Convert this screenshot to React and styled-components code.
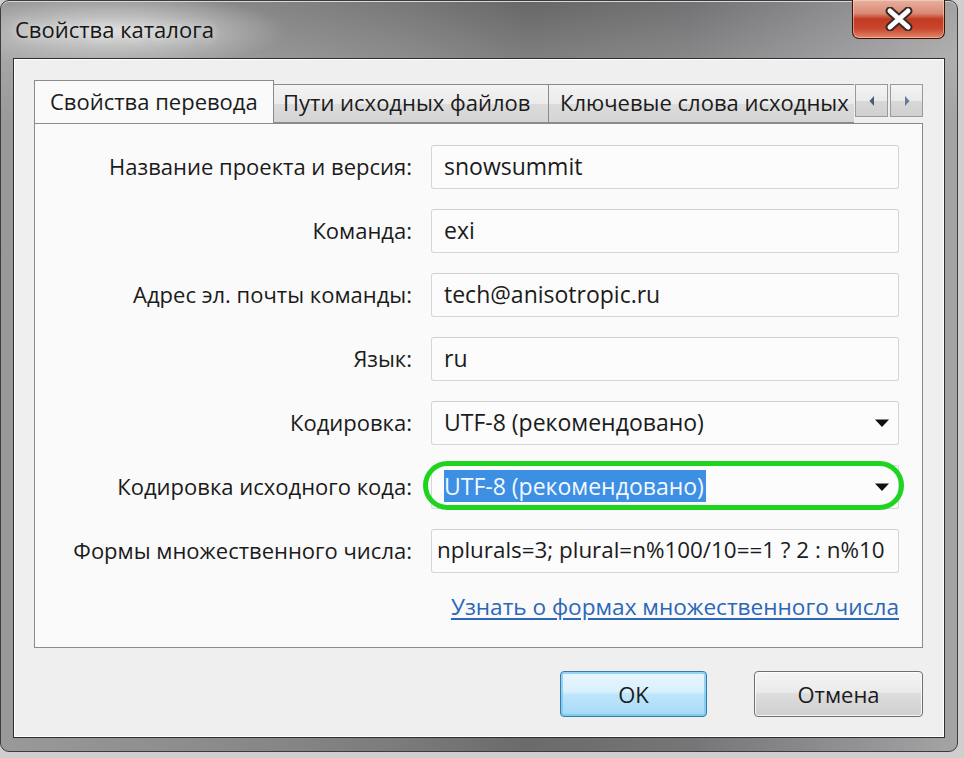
import React from 'react';
import styled, { createGlobalStyle } from 'styled-components';

const GlobalStyle = createGlobalStyle`
    html, body {
        margin: 0;
        padding: 0;
        background: #cfcfcf;
    }
    * {
        box-sizing: border-box;
    }
`;

const Window = styled.div`
    width: 958px;
    height: 752px;
    display: flex;
    flex-direction: column;
    padding: 0 12px 13px 12px;
    border: 1px solid #3c3c3c;
    border-radius: 9px;
    box-shadow: inset 0 1px 0 #d8d8d8;
    background:
        radial-gradient(ellipse 170px 38px at 115px 30px, rgba(225, 225, 225, 0.9), rgba(225, 225, 225, 0) 100%),
        linear-gradient(180deg, rgba(255, 255, 255, 0.08) 0px, rgba(255, 255, 255, 0.22) 56px, rgba(255, 255, 255, 0.1) 120px),
        linear-gradient(90deg, #8e8e8e 0%, #7c7c7c 25%, #6c6c6c 42%, #5a5a5a 55%, #666668 72%, #838387 88%, #9a9a9a 100%);
    font-family: "Open Sans", "Noto Sans", sans-serif;
    color: #1b1b1b;
`;

const TitleBar = styled.div`
    height: 57px;
    display: flex;
    align-items: flex-start;
    flex-shrink: 0;
`;

const Title = styled.div`
    padding: 13px 0 0 2px;
    font-size: 22px;
    color: #161616;
    text-shadow: 0 0 10px rgba(255, 255, 255, 0.9);
`;

const CloseButton = styled.div`
    margin-left: auto;
    width: 93px;
    height: 39px;
    margin-top: -1px;
    display: flex;
    align-items: center;
    justify-content: center;
    border: 1px solid #3a1208;
    border-top: none;
    border-radius: 0 0 7px 7px;
    background: linear-gradient(180deg, #e8b0a0 0%, #d98a74 35%, #c23a22 50%, #c8462e 75%, #e2866a 100%);
    box-shadow: inset 0 0 0 1px rgba(255, 220, 200, 0.5);
`;

const Client = styled.div`
    flex: 1;
    display: flex;
    flex-direction: column;
    padding: 21px 23px 0 20px;
    background: #efefef;
    border: 1px solid #2e2e2e;
    box-shadow: inset 0 0 0 1px #ffffff;
`;

const TabStrip = styled.div`
    display: flex;
    align-items: flex-end;
    height: 43px;
`;

const TabsClip = styled.div`
    display: flex;
    align-items: flex-end;
    width: 820px;
    height: 43px;
    overflow: hidden;
    flex-shrink: 0;
`;

const Tab = styled.div`
    flex-shrink: 0;
    height: ${p => (p.$active ? 44 : 39)}px;
    width: ${p => p.$width}px;
    padding-left: ${p => p.$pad}px;
    padding-bottom: 3px;
    margin-bottom: ${p => (p.$active ? -1 : 0)}px;
    display: flex;
    align-items: center;
    white-space: nowrap;
    font-size: 22px;
    border: 1px solid #8a8a8a;
    border-left-width: ${p => (p.$first || p.$active ? 1 : 0)}px;
    border-bottom: ${p => (p.$active ? 'none' : '1px solid #8a8a8a')};
    background: ${p => (p.$active
        ? '#fafafa'
        : 'linear-gradient(180deg, #f3f3f3 0%, #ebebeb 50%, #dcdcdc 51%, #d4d4d4 100%)')};
    position: relative;
    z-index: ${p => (p.$active ? 2 : 1)};
`;

const ScrollButtons = styled.div`
    display: flex;
    gap: 2px;
    margin-left: 1px;
    align-self: flex-start;
    margin-top: 4px;
`;

const ScrollButton = styled.div`
    width: 33px;
    height: 33px;
    display: flex;
    align-items: center;
    justify-content: center;
    border: 1px solid #9a9a9a;
    background: linear-gradient(180deg, #f4f4f4 0%, #eaeaea 50%, #d8d8d8 51%, #d0d0d0 100%);
`;

const Pane = styled.div`
    width: 889px;
    height: 525px;
    background: #fafafa;
    border: 1px solid #8a8a8a;
    padding: 21px 23px 0 0;
    display: flex;
    flex-direction: column;
`;

const Form = styled.div`
    display: grid;
    grid-template-columns: 1fr 468px;
    column-gap: 19px;
    row-gap: 20px;
`;

const Label = styled.div`
    height: 44px;
    display: flex;
    align-items: center;
    justify-content: flex-end;
    padding-bottom: 2px;
    font-size: 22px;
    white-space: nowrap;
`;

const Field = styled.div`
    position: relative;
    height: 44px;
    display: flex;
    align-items: center;
    padding-left: ${p => p.$pad ?? 12}px;
    padding-right: 8px;
    background: #fcfcfc;
    border: 1px solid #d6d6d6;
    border-top-color: #cfcfcf;
    border-radius: 3px;
    font-size: ${p => p.$size ?? 23}px;
    white-space: nowrap;
    overflow: ${p => (p.$clip ? 'hidden' : 'visible')};
`;

const FieldText = styled.span`
    flex: 1;
    min-width: 0;
    height: 34px;
    line-height: 32px;
    overflow: hidden;
`;

const Selection = styled.span`
    display: inline-block;
    height: 32px;
    line-height: 32px;
    margin-left: -2px;
    padding: 0 2px 0 2px;
    background: #3d8fe3;
    color: #f4f8ff;
`;

const DropArrow = styled.svg`
    flex-shrink: 0;
`;

const Highlight = styled.div`
    position: absolute;
    left: -9px;
    right: -6px;
    top: -5px;
    bottom: -2px;
    border: 5px solid #1fd41f;
    border-radius: 26px;
    pointer-events: none;
`;

const LinkRow = styled.div`
    display: flex;
    justify-content: flex-end;
    margin-top: 18px;
`;

const Link = styled.a`
    font-size: 22.6px;
    color: #2a67b8;
    text-decoration: underline;
    text-underline-offset: 3px;
    cursor: pointer;
`;

const Footer = styled.div`
    display: flex;
    justify-content: flex-end;
    gap: 47px;
    width: 889px;
    margin-top: 23px;
`;

const Button = styled.div`
    width: ${p => p.$width}px;
    height: 46px;
    display: flex;
    align-items: center;
    justify-content: center;
    font-size: 22px;
    border-radius: 4px;
    border: 1px solid ${p => (p.$default ? '#3b79a8' : '#6f6f6f')};
    background: ${p => (p.$default
        ? 'linear-gradient(180deg, #eaf6fd 0%, #d9f0fc 45%, #bee6fd 50%, #a7d9f5 100%)'
        : 'linear-gradient(180deg, #f4f4f4 0%, #ebebeb 45%, #dddddd 50%, #cfcfcf 100%)')};
    box-shadow: inset 0 0 0 ${p => (p.$default ? 2 : 1)}px ${p => (p.$default ? 'rgba(110, 200, 240, 0.7)' : 'rgba(255, 255, 255, 0.8)')};
`;

const rows = [
    { label: 'Название проекта и версия:', value: 'snowsummit' },
    { label: 'Команда:', value: 'exi' },
    { label: 'Адрес эл. почты команды:', value: 'tech@anisotropic.ru' },
    { label: 'Язык:', value: 'ru' },
    { label: 'Кодировка:', value: 'UTF-8 (рекомендовано)', select: true },
    { label: 'Кодировка исходного кода:', value: 'UTF-8 (рекомендовано)', select: true, selected: true },
    { label: 'Формы множественного числа:', value: 'nplurals=3; plural=n%100/10==1 ? 2 : n%10', pad: 5, size: 22.4, clip: true },
];

const Arrow = () => (
    <DropArrow width="16" height="10" viewBox="0 0 16 10">
        <path d="M1 1.5 L15 1.5 L8 9 Z" fill="#111"/>
    </DropArrow>
);

export default function App () {
    return (
        <>
            <GlobalStyle/>
            <Window>
                <TitleBar>
                    <Title>Свойства каталога</Title>
                    <CloseButton>
                        <svg width="34" height="24" viewBox="0 0 34 24">
                            <path d="M8 4 L26 20 M26 4 L8 20" stroke="#3a2a26" strokeWidth="9" strokeLinecap="round"/>
                            <path d="M8 4 L26 20 M26 4 L8 20" stroke="#ffffff" strokeWidth="5" strokeLinecap="round"/>
                        </svg>
                    </CloseButton>
                </TitleBar>
                <Client>
                    <TabStrip>
                        <TabsClip>
                            <Tab $active $first $width={240} $pad={15}>Свойства перевода</Tab>
                            <Tab $width={275} $pad={9}>Пути исходных файлов</Tab>
                            <Tab $width={320} $pad={11}>Ключевые слова исходных</Tab>
                        </TabsClip>
                        <ScrollButtons>
                            <ScrollButton>
                                <svg width="8" height="12" viewBox="0 0 8 12">
                                    <path d="M6 1 L1.5 6 L6 11 Z" fill="#4a5a7a"/>
                                </svg>
                            </ScrollButton>
                            <ScrollButton>
                                <svg width="8" height="12" viewBox="0 0 8 12">
                                    <path d="M2 1 L6.5 6 L2 11 Z" fill="#6a7a9a"/>
                                </svg>
                            </ScrollButton>
                        </ScrollButtons>
                    </TabStrip>
                    <Pane>
                        <Form>
                            {rows.map(row => (
                                <React.Fragment key={row.label}>
                                    <Label>{row.label}</Label>
                                    <Field $pad={row.pad} $size={row.size} $clip={row.clip}>
                                        <FieldText>
                                            {row.selected ? <Selection>{row.value}</Selection> : row.value}
                                        </FieldText>
                                        {row.select && <Arrow/>}
                                        {row.selected && <Highlight/>}
                                    </Field>
                                </React.Fragment>
                            ))}
                        </Form>
                        <LinkRow>
                            <Link>Узнать о формах множественного числа</Link>
                        </LinkRow>
                    </Pane>
                    <Footer>
                        <Button $default $width={147}>OK</Button>
                        <Button $width={169}>Отмена</Button>
                    </Footer>
                </Client>
            </Window>
        </>
    );
}
